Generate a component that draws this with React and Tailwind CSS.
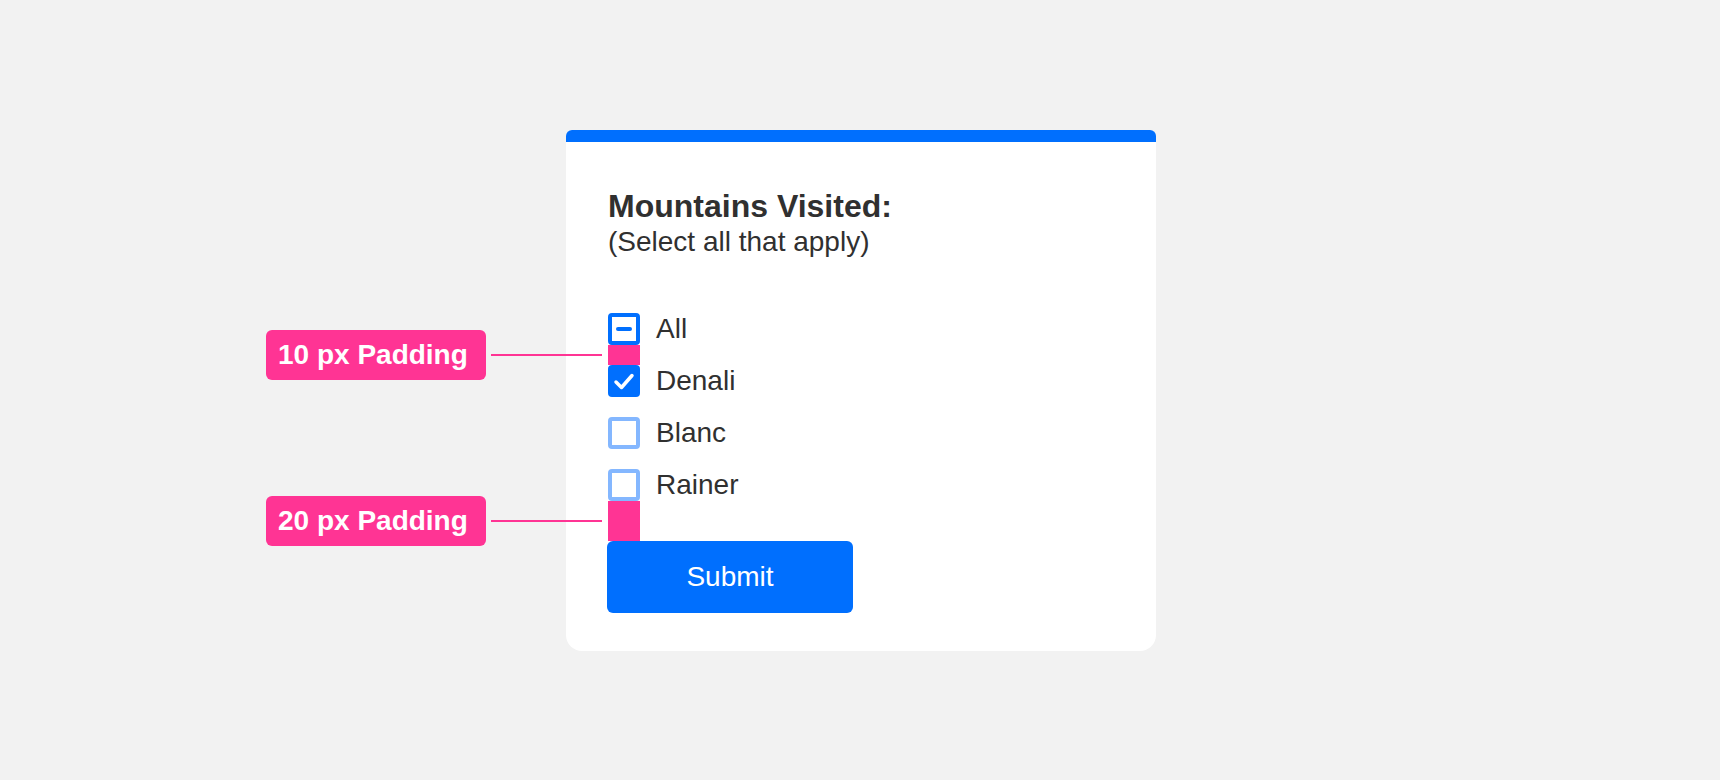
import React from "react";

const PINK = "bg-[#ff3494]";

const Annotation = ({ text }) => (
  <div className="absolute right-[calc(100%+6px)] top-1/2 flex -translate-y-1/2 items-center gap-[5px]">
    <div
      className={`flex h-[50px] w-[220px] items-center whitespace-nowrap rounded-[6px] pl-3 ${PINK} text-[28px] font-bold text-white`}
    >
      {text}
    </div>
    <div className={`h-[2px] w-[111px] ${PINK}`} />
  </div>
);

const Box = ({ state }) => {
  if (state === "checked") {
    return (
      <div className="flex h-8 w-8 items-center justify-center rounded-[4px] bg-[#006ffe]">
        <svg width="32" height="32" viewBox="0 0 32 32" fill="none">
          <path
            d="M8 17 L13.5 22.5 L24 10.5"
            stroke="white"
            strokeWidth="3.5"
            strokeLinecap="round"
            strokeLinejoin="round"
          />
        </svg>
      </div>
    );
  }

  if (state === "mixed") {
    return (
      <div className="flex h-8 w-8 items-center justify-center rounded-[4px] border-4 border-[#006ffe] bg-white">
        <div className="h-1 w-4 rounded-full bg-[#006ffe]" />
      </div>
    );
  }

  return (
    <div className="h-8 w-8 rounded-[4px] border-4 border-[#84b7ff] bg-white" />
  );
};

const Row = ({ label, state }) => (
  <label className="flex h-8 items-center gap-4">
    <Box state={state} />
    <span className="text-[28px] leading-8 text-[#303030]">{label}</span>
  </label>
);

export default function App() {
  return (
    <div
      className="min-h-screen bg-[#f2f2f2] pt-[130px] pl-[2px]"
      style={{ fontFamily: '"Liberation Sans", Arial, sans-serif' }}
    >
      <div className="mx-auto w-[590px] rounded-t-[6px] rounded-b-[16px] bg-white">
        <div className="h-3 rounded-t-[6px] bg-[#006ffe]" />

        <div className="px-[42px] pt-[45px] pb-[38px]">
          {/* Header */}
          <h2 className="text-[32px] font-bold leading-[1.2] text-[#303030]">
            Mountains Visited:
          </h2>
          <p className="text-[28px] leading-[1.2] text-[#303030]">
            (Select all that apply)
          </p>

          {/* Options */}
          <div className="mt-[54px] flex flex-col">
            <Row label="All" state="mixed" />

            <div className={`relative h-5 w-8 ${PINK}`}>
              <Annotation text="10 px Padding" />
            </div>

            <Row label="Denali" state="checked" />
            <div className="h-5" />
            <Row label="Blanc" state="empty" />
            <div className="h-5" />
            <Row label="Rainer" state="empty" />

            <div className={`relative h-10 w-8 ${PINK}`}>
              <Annotation text="20 px Padding" />
            </div>
          </div>

          <button className="-ml-px h-[72px] w-[246px] rounded-[6px] bg-[#006ffe] text-[28px] text-white">
            Submit
          </button>
        </div>
      </div>
    </div>
  );
}
